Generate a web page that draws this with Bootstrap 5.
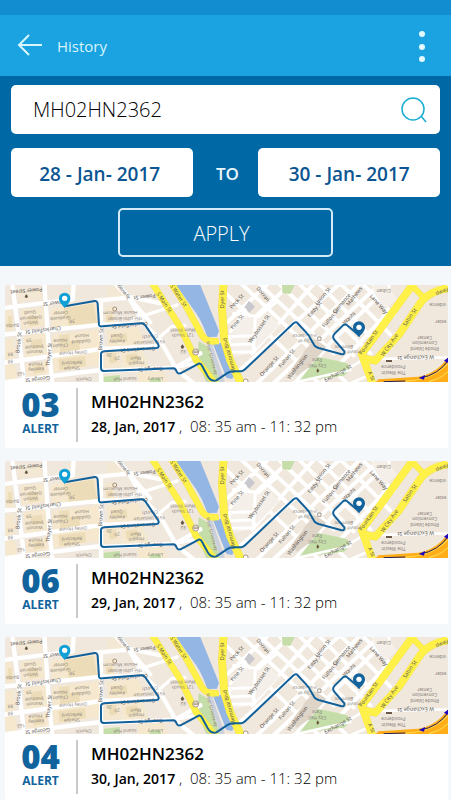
<!DOCTYPE html>
<html lang="en">
<head>
<meta charset="utf-8">
<meta name="viewport" content="width=device-width, initial-scale=1">
<title>History</title>
<link href="https://cdn.jsdelivr.net/npm/bootstrap@5.3.0/dist/css/bootstrap.min.css" rel="stylesheet">
<style>
body{font-family:"Open Sans","Noto Sans",sans-serif;background:#f4f8fb;color:#000}
.status-strip{height:15px;background:#118dd0}
.top-bar{height:61px;background:#1aa3e0;padding:0 17px;gap:14px}
.top-bar h1{font-size:15px;font-weight:400;color:#d9f4fc}
.icon-btn{background:none;border:0;padding:0;line-height:0}
.filter-panel{background:#0068a4;padding:9px 11px}
.field{height:49px;border:0;border-radius:5px;background:#fff}
.search-field{padding:0 50px 0 22px;font-size:20px;color:#000;font-weight:300}
.search-go{right:12px;top:10px}
.date-row{margin-top:14px}
.date-field{font-size:19px;color:#0a5592;font-weight:600;text-align:center;padding:2px 5px 0 0;min-width:0}
.date-field.until{padding:2px 0 0}
.to-word{width:65px;flex:none;text-align:center;color:#e8f6fc;font-size:17px;font-weight:600;padding:3px 0 0 3px}
.apply-btn{display:block;width:50%;height:49px;margin:11px auto 0;border:2px solid #d3ebf7;border-radius:5px;color:#fff;font-size:20px;font-weight:300;background:none;padding:2px 8px 0 0}
.trip-list{padding:19px 3px 0 5px;gap:13px}
.trip{background:#fff;border-radius:3px;overflow:hidden}
.trip-map{display:block;width:100%;aspect-ratio:443/97}
.trip-info{height:66px}
.alerts{width:73px;border-right:2px solid #c9c9c9;height:54px;margin-top:6px;color:#11639d;text-align:center;font-weight:700}
.alerts b{display:block;font-size:33px;line-height:34px}
.alerts span{display:block;font-size:12px;line-height:14px}
.details{padding:9px 0 0 13px}
.details h2{font-size:17px;line-height:22px;font-weight:600;margin:0}
.details p{font-size:15px;line-height:26px;margin:0;white-space:pre-wrap;font-weight:300}
.details time{font-weight:600;font-size:14px}
.w-road{fill:none;stroke:#fff;stroke-linecap:round;stroke-linejoin:round}
.map-label{font:14px "Noto Sans","Open Sans",sans-serif;fill:#8b857d;text-anchor:middle}
.road-label{font:16px "Noto Sans","Open Sans",sans-serif;fill:#5a5752;text-anchor:middle}
</style>
<script src="https://cdn.jsdelivr.net/npm/bootstrap@5.3.0/dist/js/bootstrap.bundle.min.js"></script>
</head>
<body>
<svg width="0" height="0" class="position-absolute" aria-hidden="true">
<symbol id="route-map" viewBox="14 15 1329 291" preserveAspectRatio="xMidYMid slice">
<rect x="10" y="10" width="1340" height="300" fill="#f0e7dd"/>
<!-- campus blocks -->
<g fill="#f5e8ce">
<path d="M62 88l68-5 5 56-70 8zM70 167l68-8 4 76-66 6zM76 252l66-8 4 44-66 6zM152 85l40-6 95-12 8 65-140 17zM155 166l140-19 2 108-137 22zM14 92l20-2 6 62-26 3zM14 178l26-3 5 60-31 4zM320 150l96-9 15 50-108 12zM314 82l26-3 3 48-27 2zM362 217l62-7 22 52-80 5zM14 255l30-3 4 45-34 5zM312 217l45-5 5 48-50 6zM410 278l82-6 10 34h-90z"/>
<path d="M52 35l70-9 4 32-70 10zM318 22l32-2 22 32-50 5z" opacity=".65"/>
</g>
<g fill="#eddcb8"><path d="M191 85l88-14 12 60-86 11-5-28-9-3zM176 166l30-4 2 22 28-4 4 32-60 8zM174 238l80-10 4 29-80 14zM82 110l30-3 4 28-29 4zM89 180l36-4 3 27-33 4zM333 165l45-5 5 24-47 5zM318 105l18-2 2 20-20 2zM96 256l32-5 4 25-31 5zM22 110l12-2 2 34-14 2zM325 222l21-3 4 28-22 3zM375 224l35-4 12 24-43 5z"/></g>
<!-- parks and water -->
<g fill="#c5dda9"><path d="M310 290l48-5 4 25h-52zM595 183l28 17 38 110h-42l-28-65zM448 296l30-3 5 13h-35z"/></g>
<path fill="#93b6e5" d="M527 15h73l56 137-6 18-29 1q-12-38-34-72zM638 192l23-3 46 90-12 18-17-4z"/>
<path fill="#cbd0da" d="M625 195l10-3 38 112-12 4z"/>
<!-- campus streets -->
<g class="w-road" stroke-width="13">
<path d="M36 10L57 180 72 310M132 10L145 200 156 310M220 10L217 58 10 84M10 164L304 134 430 130M10 248L304 207 474 199M10 307L250 276 305 270M302 66V306M288 62L395 52 480 70M430 130L390 60 344 10M430 130L479 180 530 270 580 310M305 273L525 263 600 220M350 10L450 128" />
<path d="M395 118L530 75M479 170l35-30 40-4M525 263l70-15" stroke-width="10"/>
</g>
<!-- downtown grid -->
<g class="w-road" stroke-width="12">
<path d="M678 42L900 254 960 315M722 10L1035 305M775 10L1000 220M835 10L1060 226M895 10L1110 220M955 10L1120 180M1020 10L1170 164M1085 10L1180 105M683 125L804 10M680 190L872 10M755 220L942 10M716 272L1020 10M770 310L1080 10M820 310L1140 10M883 310L998 180 1165 20M963 310L1030 240 1165 95"/>
</g>
<path fill="#c9c8cc" d="M732 82l14-20 18 18-17 19z"/>
<path fill="#c5dda9" d="M845 15h38l-13 27-24-3z"/>
<g fill="#f4efe8"><path d="M686 130l62-26 52 10-44 105-58 13z"/><path d="M760 120l43-20 35 35-70 70z"/><path d="M1108 10h45l38 44-40 38z"/></g>
<g class="w-road" stroke-width="9"><path d="M680 170l78-3M686 195l74-4M692 217l70-2M765 112l-6 107M700 100l75 10 55-45M690 155l45-65"/></g>
<path d="M915 210l28-34 35 25-54 62-33 24-20-17z" fill="#ded4c8"/>
<path d="M953 230l83 18q16 8 11 24l-16 15-135 16z" fill="#c5dda9"/>
<path class="w-road" stroke-width="8" d="M1050 262L1090 238 1345 232M1050 310l46-20M870 310l180-40"/>
<!-- main roads -->
<g fill="none" stroke="#f3e254" stroke-linejoin="round">
<path stroke-width="20" d="M453 5L540 142 587 240 645 310M510 5L558 80 606 168Q620 188 655 183"/>
<path stroke-width="24" d="M670 5L665 85 672 182 690 242 722 310"/>
<path stroke-width="23" d="M1240 10L1134 155 1084 222 1118 315M1350 24Q1290 30 1262 66L1195 165 1125 242 1090 235"/>
<path stroke-width="18" d="M1240 22L1272 55"/>
</g>
<g fill="none" stroke="#fff148" stroke-linejoin="round">
<path stroke-width="17" d="M453 5L540 142 587 240 645 310M510 5L558 80 606 168Q620 188 655 183"/>
<path stroke-width="21" d="M670 5L665 85 672 182 690 242 722 310M1240 10L1134 155 1084 222 1118 315M1350 24Q1290 30 1262 66L1195 165 1125 242 1090 235"/>
<path stroke-width="15" d="M1240 22L1272 55"/>
</g>
<path fill="#ffad18" d="M1122 310l12-12 120-8q58-10 92-63v83z"/>
<path d="M1215 303q77-1 128-52M1285 305q35-8 58-30" fill="none" stroke="#ffd447" stroke-width="4"/>
<path d="M1150 305l65-2M1258 294q56-8 88-56" stroke="#27205d" stroke-width="3" fill="none"/>
<path d="M1256 294l18-9-3 14zM1331 242l14-10-3 17z" fill="#1b00c5"/>
<!-- street names -->
<g class="road-label">
<text transform="translate(60 188) rotate(-84)">Brook St</text><text transform="translate(151 224) rotate(-84)">Thayer St</text>
<text transform="translate(307 178) rotate(-87)">Brown St</text><text transform="translate(487 70) rotate(56)">S Main St</text>
<text transform="translate(530 49) rotate(57)">S Water St</text><text transform="translate(671 58) rotate(-90)">Dyer St</text>
<text transform="translate(692 225) rotate(-105)">Memorial Blvd</text><text transform="translate(1109 190) rotate(-55)">Fountain St</text>
<text transform="translate(1172 198) rotate(-55)">W City Ave</text><text transform="translate(1233 115) rotate(-56)">Sabin St</text>
<text transform="translate(1246 227) rotate(179)">W Exchange St</text><text transform="translate(1326 38) rotate(-23)">dway</text>
<text transform="translate(1108 290) rotate(65)">A St</text><text transform="translate(128 145) rotate(173)">Charlesfield St</text>
<text transform="translate(78 27) rotate(175)">Power Street</text><text transform="translate(432 45) rotate(173)">Power St</text>
<text transform="translate(160 64) rotate(173)">Power St</text><text transform="translate(111 292) rotate(173)">George St</text>
<text transform="translate(366 38) rotate(53)">Benefit</text><text transform="translate(388 130) rotate(175)">Charlesfield St</text>
<text transform="translate(450 262) rotate(177)">George St</text><text transform="translate(412 203) rotate(176)">Benevolent St</text>
</g>
<g class="road-label">
<text transform="translate(713 68) rotate(-47)">Peck St</text><text transform="translate(714 129) rotate(-51)">Pine St</text>
<text transform="translate(780 150) rotate(-55)">Weybosset St</text><text transform="translate(784 46) rotate(50)">Dorran</text>
<text transform="translate(947 91) rotate(-50)">Eddy St</text><text transform="translate(971 52) rotate(-50)">Union St</text>
<text transform="translate(994 118) rotate(-50)">Fulton St</text><text transform="translate(1028 74) rotate(-49)">Clemence</text>
<text transform="translate(1066 52) rotate(-52)">Mathews</text><text transform="translate(863 238) rotate(-51)">Fulton St</text>
<text transform="translate(895 263) rotate(-52)">Washington</text><text transform="translate(810 262) rotate(-48)">Orange St</text>
<text transform="translate(1015 284) rotate(-29)">Exchange St</text><text transform="translate(1050 118) rotate(-45)">Washi</text>
<text transform="translate(1131 76) rotate(49)">Lane Way</text>
</g>
<!-- place names -->
<g class="map-label">
<text transform="translate(89 93) rotate(176)">Quad</text><text transform="translate(91 109) rotate(176)">Gregorian</text><text transform="translate(91 124) rotate(176)">Vartan</text>
<text transform="translate(180 94) rotate(176)">Center</text><text transform="translate(180 110) rotate(176)">Graduate</text><text transform="translate(215 119) rotate(176)">38</text>
<text transform="translate(180 177) rotate(176)">House</text><text transform="translate(180 192) rotate(176)">Chapin</text><text transform="translate(244 163) rotate(176)">House</text><text transform="translate(242 180) rotate(176)">Goddard</text>
<text transform="translate(218 214) rotate(176)">Olney House</text><text transform="translate(214 244) rotate(176)">Refectory</text><text transform="translate(214 260) rotate(176)">Sharpe</text>
<text transform="translate(102 196) rotate(176)">Institute</text><text transform="translate(102 211) rotate(176)">Watson</text><text transform="translate(85 176) rotate(176)">59</text>
<text transform="translate(105 248) rotate(176)">House</text><text transform="translate(107 263) rotate(176)">Keeney</text><text transform="translate(62 276) rotate(176)">163</text>
<text transform="translate(36 132) rotate(176)">Barbo</text><text transform="translate(30 218) rotate(176)">88</text><text transform="translate(30 240) rotate(176)">88</text>
<text transform="translate(360 94) rotate(179)">House Museum</text><text transform="translate(374 111) rotate(179)">The John Brown</text>
<text transform="translate(349 163) rotate(177)">Quad</text><text transform="translate(350 179) rotate(177)">Keeney</text><text transform="translate(449 165) rotate(177)">Church</text><text transform="translate(446 182) rotate(177)">First Unitarian</text>
<text transform="translate(406 230) rotate(177)">Main</text><text transform="translate(408 245) rotate(177)">Hoppin</text><text transform="translate(350 230) rotate(177)">20</text><text transform="translate(326 220) rotate(177)">26</text>
<text transform="translate(250 293) rotate(178)">Church</text><text transform="translate(374 292) rotate(178)">Island Hall</text><text transform="translate(465 292) rotate(178)">Library</text>
<text transform="translate(547 146) rotate(179)">Main Street</text><text transform="translate(548 161) rotate(179)">121 South</text><text transform="translate(548 210) rotate(179)">82</text>
<text transform="translate(630 235) rotate(75)">River Greenway</text><text transform="translate(912 162) rotate(178)">Providence</text><text transform="translate(914 178) rotate(178)">City of</text>
<text transform="translate(950 235) rotate(180)">Park</text><text transform="translate(951 252) rotate(180)">City Hall</text><text transform="translate(1062 211) rotate(178)">Provid</text><text transform="translate(1030 196) rotate(178)">Biltmore</text>
<text transform="translate(1273 168) rotate(180)">Center</text><text transform="translate(1273 184) rotate(180)">Convention</text><text transform="translate(1273 201) rotate(180)">Rhode Island</text>
<text transform="translate(1179 256) rotate(180)">Providence</text><text transform="translate(1179 273) rotate(180)">The Westin</text><text transform="translate(1312 68) rotate(180)">vidence</text><text transform="translate(1321 121) rotate(180)">ester</text>
<text transform="translate(1150 28) rotate(180)">Cuban</text>
</g>
<g fill="#6b5948"><path d="M73 49l5-6 5 6-3 5h-4zM541 200l5-7 6 7-4 6h-4zM948 272l4-7 5 7-5 7z"/><path d="M1157 240h18v6h-18z"/></g>
<g fill="none" stroke="#80684f" stroke-width="2"><circle cx="343" cy="87" r="6"/><circle cx="586" cy="216" r="9" fill="#fff"/><path d="M581 213h10v5h-10zM952 171h10v10h-10z"/><circle cx="736" cy="304" r="7" fill="#fff"/></g>
<!-- driven route -->
<path d="M193 79L283 63Q291 62 292 72L296 134Q297 140 306 139L421 130Q430 129 435 136L473 192Q479 203 468 204L312 214Q302 215 302 222V264Q302 273 311 273L519 265Q526 265 529 275Q534 285 546 277L591 253Q600 247 605 257L618 281Q629 307 648 301L683 278Q691 274 702 274H722Q729 273 735 267L878 131Q888 122 894 132L918 158Q925 164 929 173L942 196Q946 201 955 204L1021 222Q1034 226 1032 214L1001 178Q995 169 1003 161L1028 136Q1036 130 1043 138L1076 166" fill="none" stroke="#13619b" stroke-width="6" stroke-linejoin="round" stroke-linecap="round"/>
<path fill="#11a0d5" d="M193 84C184 73 176 67 176 55a17 17 0 1 1 34 0c0 12-8 18-17 29z"/><circle cx="193" cy="55" r="8" fill="#fff"/>
<path fill="#13639c" d="M1076 172C1067 160 1058 154 1058 142a18 18 0 1 1 36 0c0 12-9 18-18 30z"/><circle cx="1076" cy="142" r="8" fill="#fff"/>
</symbol>
</svg>

<div class="status-strip"></div>
<header class="top-bar d-flex align-items-center">
<button class="icon-btn" type="button" aria-label="Back"><svg width="26" height="24" viewBox="0 0 26 24" fill="none" stroke="#d9f6fd" stroke-width="2"><path d="M25 11H2M12 1L2 11l10 10"/></svg></button>
<h1 class="mb-0 me-auto">History</h1>
<button class="icon-btn" type="button" aria-label="More options"><svg width="26" height="34" viewBox="0 0 26 34" fill="#e2f9ff"><circle cx="14" cy="5" r="3"/><circle cx="14" cy="18" r="3"/><circle cx="14" cy="30" r="3"/></svg></button>
</header>
<form class="filter-panel" onsubmit="return false">
<div class="position-relative">
<label class="visually-hidden" for="vehicle">Vehicle number</label>
<input class="field search-field w-100" id="vehicle" type="text" value="MH02HN2362">
<button class="icon-btn search-go position-absolute" type="button" aria-label="Search"><svg width="28" height="28" viewBox="0 0 28 28" fill="none" stroke="#1aaed3" stroke-width="1.500"><circle cx="13" cy="14" r="11"/><path d="M21 21l5 6"/></svg></button>
</div>
<div class="date-row d-flex align-items-center">
<label class="visually-hidden" for="from">From date</label>
<input class="field date-field flex-fill w-50" id="from" type="text" value="28 - Jan- 2017">
<label class="to-word" for="until">TO</label>
<input class="field date-field until flex-fill w-50" id="until" type="text" value="30 - Jan- 2017">
</div>
<button class="apply-btn" type="submit">APPLY</button>
</form>
<main class="trip-list d-flex flex-column">
<article class="trip">
<svg class="trip-map" role="img" aria-label="Route map"><use href="#route-map"/></svg>
<div class="trip-info d-flex"><div class="alerts"><b>03</b><span>ALERT</span></div>
<div class="details"><h2>MH02HN2362</h2><p><time datetime="2017-01-28">28, Jan, 2017</time> ,  08: 35 am - 11: 32 pm</p></div></div>
</article>
<article class="trip">
<svg class="trip-map" role="img" aria-label="Route map"><use href="#route-map"/></svg>
<div class="trip-info d-flex"><div class="alerts"><b>06</b><span>ALERT</span></div>
<div class="details"><h2>MH02HN2362</h2><p><time datetime="2017-01-29">29, Jan, 2017</time> ,  08: 35 am - 11: 32 pm</p></div></div>
</article>
<article class="trip">
<svg class="trip-map" role="img" aria-label="Route map"><use href="#route-map"/></svg>
<div class="trip-info d-flex"><div class="alerts"><b>04</b><span>ALERT</span></div>
<div class="details"><h2>MH02HN2362</h2><p><time datetime="2017-01-30">30, Jan, 2017</time> ,  08: 35 am - 11: 32 pm</p></div></div>
</article>
</main>
</body>
</html>
